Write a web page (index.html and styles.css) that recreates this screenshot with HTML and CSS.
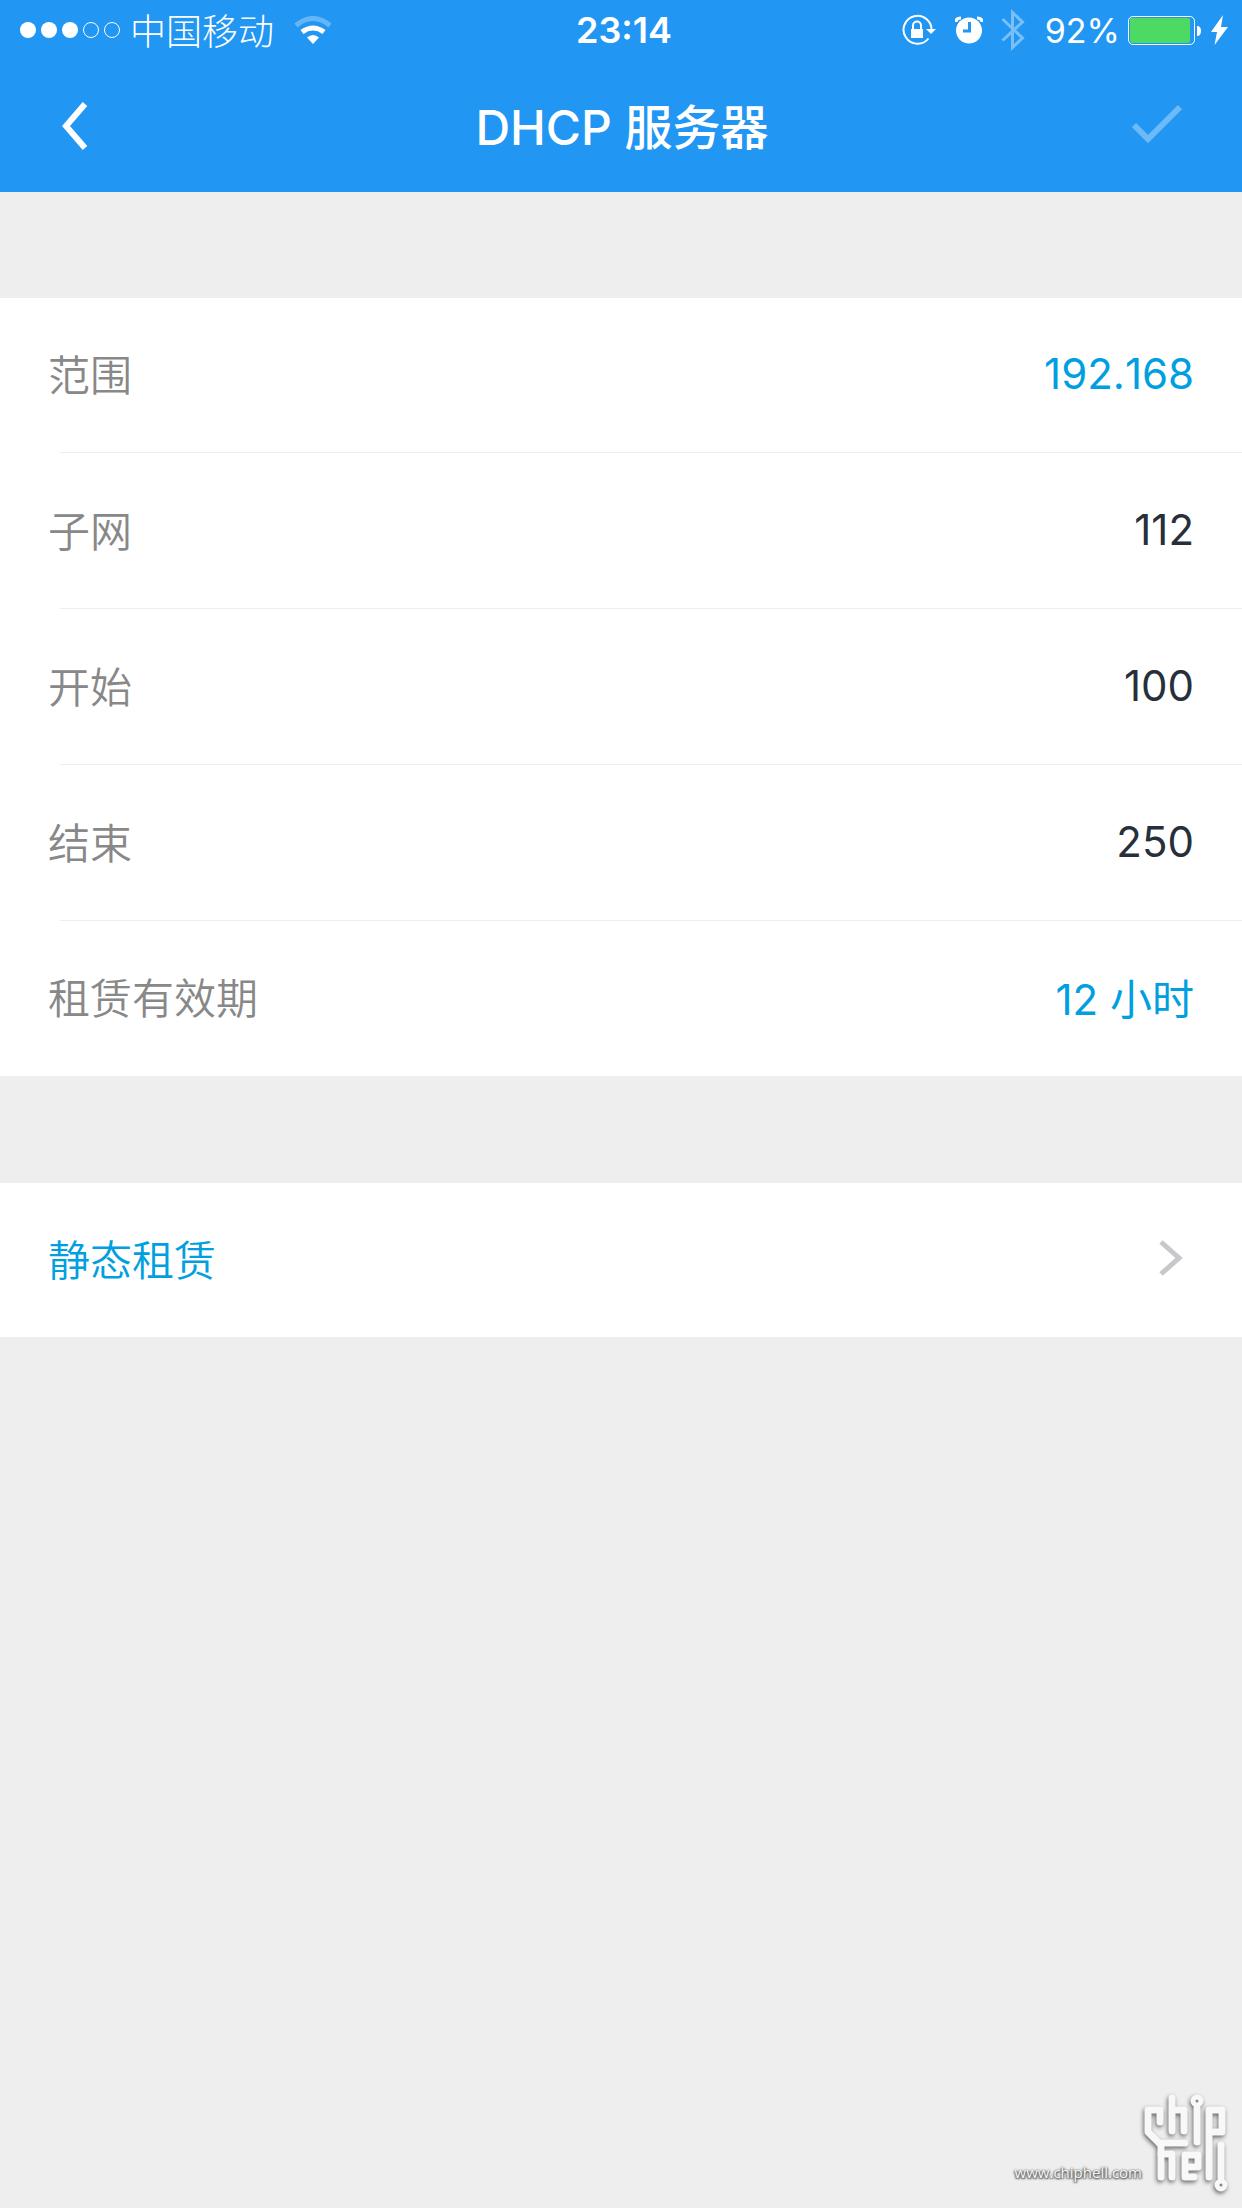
FILE: index.html
```html
<!DOCTYPE html>
<html lang="zh-CN">
<head>
<meta charset="utf-8">
<meta name="viewport" content="width=device-width, initial-scale=1">
<title>DHCP 服务器</title>
<link rel="stylesheet" href="styles.css">
</head>
<body>
<header class="header">
  <div class="status">
    <div class="status-side">
      <svg class="signal" width="100" height="18" viewBox="0 0 100 18" aria-hidden="true">
        <g fill="#fff"><circle cx="8" cy="9" r="8"/><circle cx="29" cy="9" r="8"/><circle cx="50" cy="9" r="8"/></g>
        <g fill="none" stroke="#fff"><circle cx="71" cy="9" r="7.5"/><circle cx="92" cy="9" r="7.5"/></g>
      </svg>
      <span class="carrier">中国移动</span>
      <svg class="wifi" width="38" height="28" viewBox="0 0 38 28" aria-hidden="true">
        <path d="M2 9.500Q19-4.500 36 9.500" fill="none" stroke="#fff" stroke-opacity=".3" stroke-width="5"/>
        <path d="M8 16Q19 8 30 16" fill="none" stroke="#fff" stroke-width="5"/>
        <path d="M13 21.500Q19 16.500 25 21.500L19 28Z" fill="#fff"/>
      </svg>
    </div>
    <time class="clock">23:14</time>
    <div class="status-side status-right">
      <svg class="lock" width="36" height="32" viewBox="0 0 36 32" aria-hidden="true">
        <path d="M30.500 17A14 14 0 1 0 27.500 24.500" fill="none" stroke="#fff" stroke-width="2"/>
        <path d="M25 15H35L30 20Z" fill="#fff"/>
        <rect x="10" y="15" width="12" height="9" fill="#fff"/>
        <path d="M12 15V11.500A4 4 0 0 1 20 11.500V15" fill="none" stroke="#fff" stroke-width="2"/>
      </svg>
      <svg class="alarm" width="28" height="28" viewBox="0 0 28 28" aria-hidden="true">
        <circle cx="14" cy="14.500" r="13" fill="#fff"/>
        <path d="M1 6Q1 2 6 2M27 6Q27 2 22 2" fill="none" stroke="#fff" stroke-width="3"/>
        <path d="M14.500 6V15H8" fill="none" stroke="#2196f3" stroke-width="3"/>
      </svg>
      <svg class="bluetooth" width="24" height="42" viewBox="0 0 24 42" aria-hidden="true">
        <path d="M1.500 10L21.500 29L11.500 38.500V3.500L21.500 13L1.500 31.500" fill="none" stroke="#fff" stroke-opacity=".4" stroke-width="3"/>
      </svg>
      <span class="percent">92%</span>
      <svg class="battery" width="74" height="30" viewBox="0 0 74 30" aria-hidden="true">
        <rect x=".5" y="1.500" width="66" height="28" rx="4.500" fill="none" stroke="#fff"/>
        <rect x="2" y="3" width="60" height="25" rx="2" fill="#4cd964"/>
        <path d="M69 11Q73 11 73 16T69 21Z" fill="#fff"/>
      </svg>
      <svg class="bolt" width="17" height="30" viewBox="0 0 17 30" aria-hidden="true">
        <path d="M12 0L0 17H6L3.500 30L17 12H10Z" fill="#fff"/>
      </svg>
    </div>
  </div>
  <nav class="navbar">
    <button class="nav-button" type="button" aria-label="返回">
      <svg width="26" height="50" viewBox="0 0 26 50"><path d="M23 3L4 25L23 47" fill="none" stroke="#fff" stroke-width="6"/></svg>
    </button>
    <h1 class="title">DHCP 服务器</h1>
    <button class="nav-button nav-done" type="button" aria-label="完成" disabled>
      <svg width="50" height="40" viewBox="0 0 50 40"><path d="M2 21L16 35L48 3" fill="none" stroke="#fff" stroke-opacity=".35" stroke-width="6"/></svg>
    </button>
  </nav>
</header>

<main class="content">
  <form class="card">
    <div class="row">
      <label class="label" for="range">范围</label>
      <button class="value value-pick" id="range" type="button">192.168</button>
    </div>
    <div class="row">
      <label class="label" for="subnet">子网</label>
      <input class="value" id="subnet" type="text" inputmode="numeric" value="112">
    </div>
    <div class="row">
      <label class="label" for="start">开始</label>
      <input class="value" id="start" type="text" inputmode="numeric" value="100">
    </div>
    <div class="row">
      <label class="label" for="end">结束</label>
      <input class="value" id="end" type="text" inputmode="numeric" value="250">
    </div>
    <div class="row">
      <label class="label" for="lease">租赁有效期</label>
      <button class="value value-pick" id="lease" type="button">12 小时</button>
    </div>
  </form>

  <section class="card">
    <a class="row row-link" href="#static">
      <span class="link-text">静态租赁</span>
      <svg width="26" height="38" viewBox="0 0 26 38" aria-hidden="true"><path d="M3 3L21 19L3 35" fill="none" stroke="#c7c7cc" stroke-width="5"/></svg>
    </a>
  </section>
</main>

<footer class="watermark">
  <span class="site">www.chiphell.com</span>
  <svg class="logo" width="90" height="104" viewBox="0 0 90 104" role="img" aria-label="chiphell">
    <g fill="none" stroke="#f8f8f8" stroke-width="7" stroke-linejoin="round" stroke-linecap="round">
      <path d="M18 28V16H6V38L19 51V83M17 49H43"/>
      <path d="M30 4V37M30 16H42V37"/>
      <path d="M55 14V48"/>
      <path d="M67 83V16H80V38H69"/>
      <path d="M19 60H30V83"/>
      <path d="M44 73H56V61H43V83H52"/>
      <path d="M79 51V84"/>
      <g fill="#888" stroke-width="5"><circle cx="55" cy="7" r="4"/><circle cx="79" cy="91" r="4"/></g>
    </g>
  </svg>
</footer>
</body>
</html>
```
FILE: styles.css
```css
* {
  box-sizing: border-box;
}

body {
  margin: 0;
  min-height: 100vh;
  position: relative;
  background: #eee;
  font-family: Inter, "Noto Sans CJK SC", sans-serif;
  font-size: 42px;
}

.header {
  background: #2196f3;
  color: #fff;
}

.status {
  display: grid;
  grid-template-columns: 1fr auto 1fr;
  align-items: center;
  height: 60px;
  padding: 0 14px 0 20px;
  font-size: 36px;
}

.status-side {
  display: flex;
  align-items: center;
}

.status-right {
  justify-content: flex-end;
}

.carrier {
  margin: 0 20px 0 10px;
  padding-bottom: 2px;
  font-weight: 300;
}

.clock {
  font-weight: 600;
}

.percent {
  font-size: 34px;
}

.alarm {
  margin-left: 18px;
}

.bluetooth {
  margin: 0 20px 0 18px;
}

.battery {
  margin: 0 9px 0 8px;
}

.navbar {
  display: grid;
  grid-template-columns: 1fr auto 1fr;
  align-items: center;
  height: 132px;
  padding: 0 60px 0 62px;
}

.nav-button {
  display: flex;
  justify-self: start;
  padding: 0;
  border: 0;
  background: none;
}

.nav-done {
  justify-self: end;
  padding-bottom: 4px;
}

.title {
  margin: 0;
  padding-bottom: 4px;
  font-size: 48px;
  font-weight: 500;
}

.content {
  display: grid;
  gap: 107px;
  padding: 106px 0;
}

.card {
  background: #fff;
}

.row {
  position: relative;
  display: flex;
  align-items: center;
  justify-content: space-between;
  height: 156px;
  padding: 0 48px 4px;
}

.row:first-child,
.row:last-child {
  height: 155px;
}

.row:not(:last-child)::after {
  content: "";
  position: absolute;
  right: 0;
  bottom: 0;
  left: 60px;
  height: 1px;
  background: #eee;
}

.label,
.link-text {
  padding-bottom: 2px;
  font-weight: 350;
}

.label {
  color: #888;
}

.value {
  flex: 1;
  min-width: 0;
  padding: 0;
  border: 0;
  background: none;
  color: #272f3a;
  font: inherit;
  font-kerning: none;
  text-align: right;
}

.value-pick,
.row-link {
  color: #00a0e0;
}

.row.row-link {
  height: 154px;
  padding-right: 58px;
  text-decoration: none;
}

.watermark {
  position: absolute;
  right: 10px;
  bottom: 10px;
  display: flex;
  align-items: flex-end;
}

.site {
  padding-bottom: 16px;
  color: #f8f8f8;
  font-family: "Open Sans", sans-serif;
  font-size: 15px;
  text-shadow: 0 0 2px #555, 1px 1px 2px #555, -1px 1px 2px #777;
}

.logo {
  filter: drop-shadow(-1px 2px 2px #666);
}
```
